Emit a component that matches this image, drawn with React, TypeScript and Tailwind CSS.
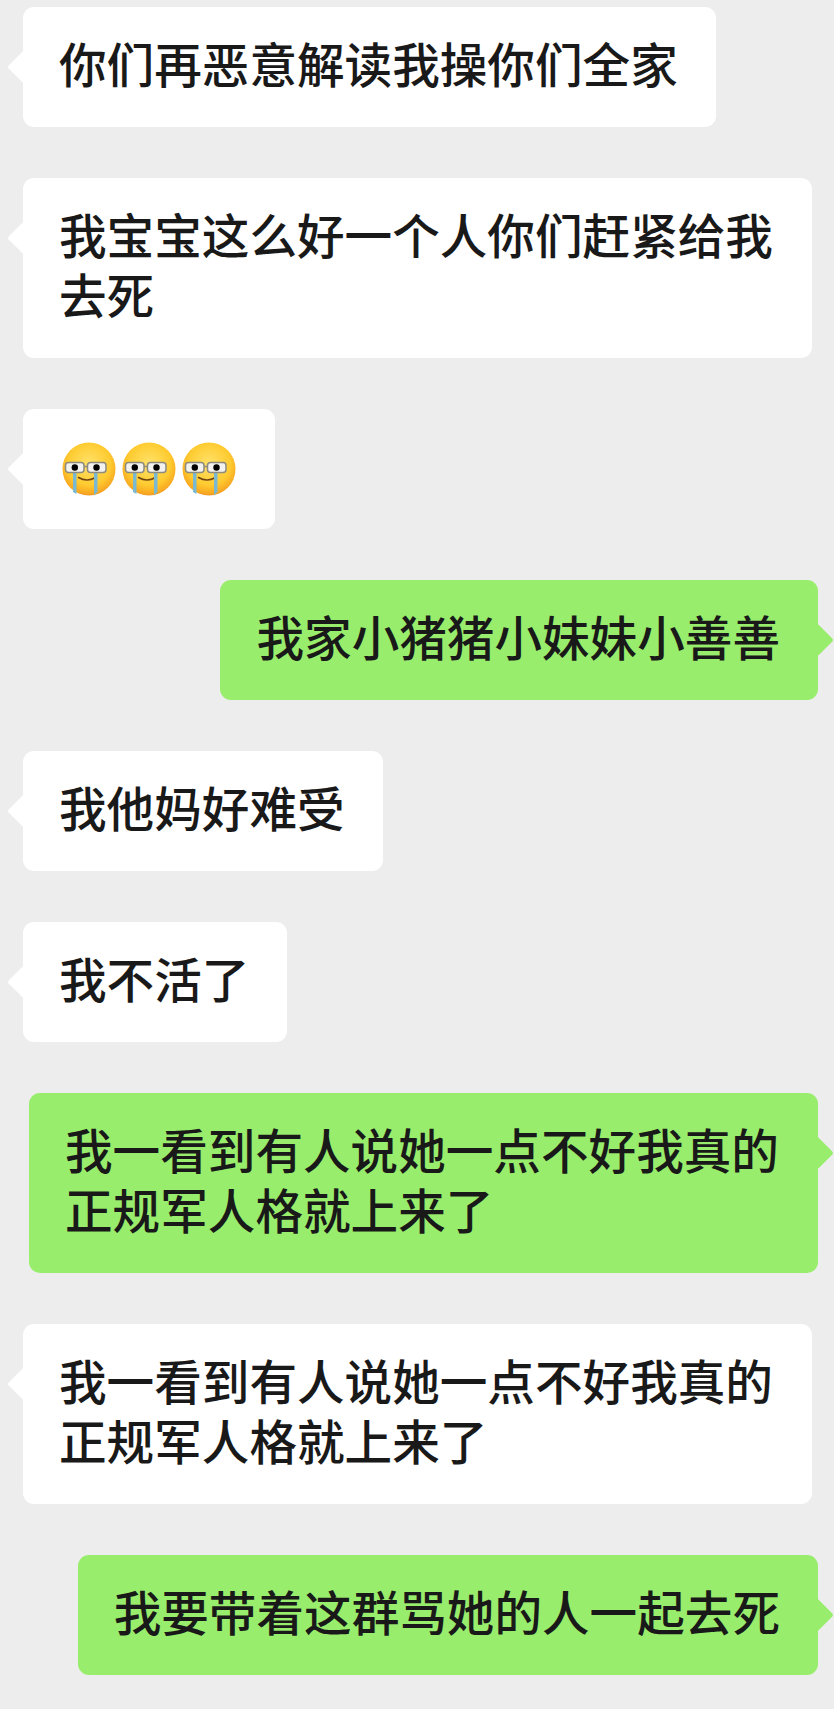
const FONT = '[font-family:"Noto_Sans_CJK_SC","Noto_Sans",sans-serif]'

function CryFace({ id }: { id: string }) {
  return (
    <svg width="54" height="54" viewBox="0 0 54 54" className="shrink-0">
      <defs>
        <radialGradient id={id} cx="50%" cy="40%" r="62%">
          <stop offset="0%" stopColor="#ffe26a" />
          <stop offset="65%" stopColor="#fecb30" />
          <stop offset="90%" stopColor="#f8a921" />
          <stop offset="100%" stopColor="#e8922a" />
        </radialGradient>
      </defs>
      <circle cx="27" cy="27" r="26.5" fill={`url(#${id})`} />
      <path d="M16.500 35.500 Q25 40.500 33.500 35.500" fill="none" stroke="#6f4410" strokeWidth="1.500" strokeLinecap="round" />
      <path d="M11 30h3.500v22l-3.500-2z" fill="#79b9d2" />
      <path d="M32 30h3.500v20l-3.500 3z" fill="#79b9d2" />
      <rect x="3.500" y="20.500" width="18.500" height="10" rx="3" fill="#f4f2ee" stroke="#8d8a80" strokeWidth="1.500" />
      <rect x="25.500" y="20.500" width="18.500" height="10" rx="3" fill="#f4f2ee" stroke="#8d8a80" strokeWidth="1.500" />
      <path d="M22 24.500h3.500" stroke="#8d8a80" strokeWidth="1.500" />
      <circle cx="12.800" cy="25.500" r="3.200" fill="#000" />
      <circle cx="34.500" cy="25.500" r="3.200" fill="#000" />
    </svg>
  )
}

function Bubble({ side, children }: { side: 'left' | 'right'; children: React.ReactNode }) {
  const isRight = side === 'right'
  return (
    <div className={isRight ? 'flex justify-end pr-[16px]' : 'flex justify-start pl-[23px]'}>
      <div
        className={`relative max-w-[789px] rounded-[11px] pl-[36px] pr-[38px] pt-[26px] pb-[34px] text-[47.6px] leading-[60px] font-medium text-[#191919] ${
          isRight ? 'bg-[#98ed6c]' : 'bg-white'
        }`}
      >
        <span
          className={`absolute top-[48px] h-[24px] w-[24px] rotate-45 rounded-[3px] ${
            isRight ? 'right-[-11px] bg-[#98ed6c]' : 'left-[-11px] bg-white'
          }`}
        />
        <div className="relative">{children}</div>
      </div>
    </div>
  )
}

const messages: { side: 'left' | 'right'; text: string }[] = [
  { side: 'left', text: '你们再恶意解读我操你们全家' },
  { side: 'left', text: '我宝宝这么好一个人你们赶紧给我去死' },
  { side: 'left', text: '' },
  { side: 'right', text: '我家小猪猪小妹妹小善善' },
  { side: 'left', text: '我他妈好难受' },
  { side: 'left', text: '我不活了' },
  { side: 'right', text: '我一看到有人说她一点不好我真的正规军人格就上来了' },
  { side: 'left', text: '我一看到有人说她一点不好我真的正规军人格就上来了' },
  { side: 'right', text: '我要带着这群骂她的人一起去死' },
]

export default function App() {
  return (
    <div className={`flex min-h-[1709px] flex-col gap-[51px] bg-[#ededed] pt-[7px] pb-[34px] ${FONT}`}>
      {messages.map((m, i) => (
        <Bubble key={i} side={m.side}>
          {m.text || (
            <div className="mt-[4px] mb-[-4px] ml-[3px] mr-[1px] flex h-[60px] items-center gap-[6px]">
              <CryFace id="cry1" />
              <CryFace id="cry2" />
              <CryFace id="cry3" />
            </div>
          )}
        </Bubble>
      ))}
    </div>
  )
}
